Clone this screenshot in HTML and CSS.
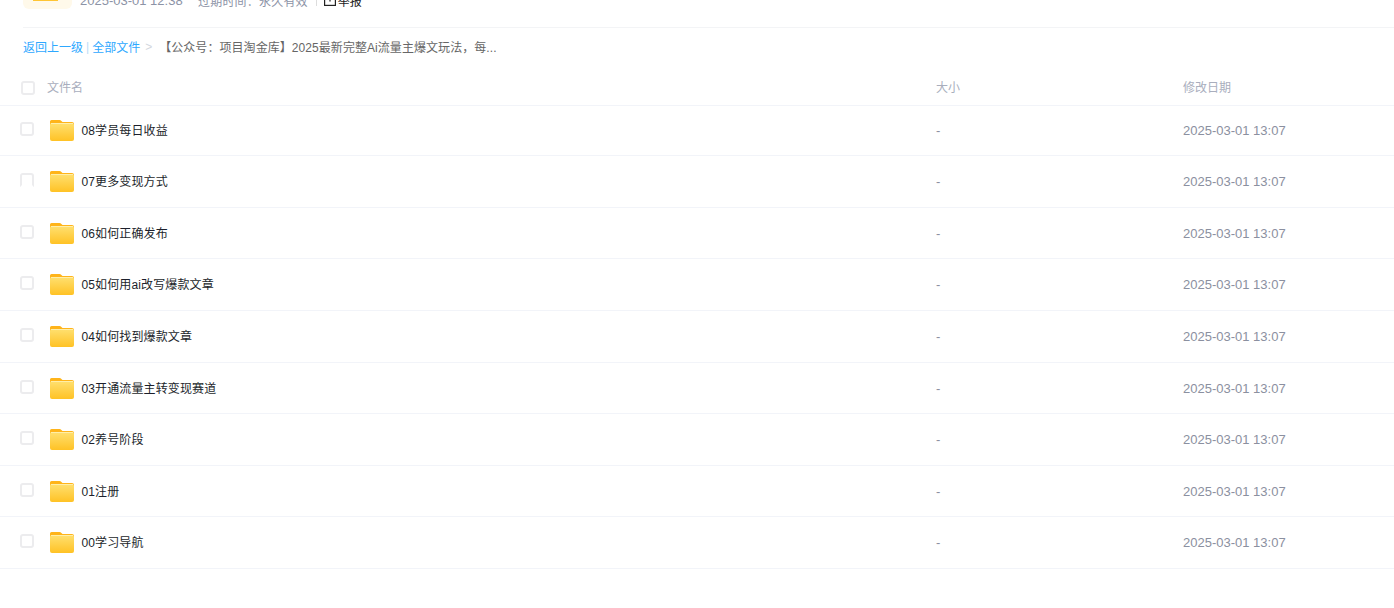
FILE: index.html
```html
<!DOCTYPE html>
<html lang="zh-CN">
<head>
    <meta charset="UTF-8">
    <title>文件列表</title>
    <link rel="stylesheet" href="styles.css">
</head>
<body>
<svg class="sprite" width="0" height="0">
    <defs>
        <linearGradient id="folder_front" x1="0" y1="0" x2="0" y2="1">
            <stop offset="0" stop-color="#ffe070"/>
            <stop offset="1" stop-color="#ffc225"/>
        </linearGradient>
        <symbol id="folder" viewBox="0 0 24 21">
            <path d="M1.500 0h8c.8 0 1.300.3 1.900.9L12.500 2H22a2 2 0 0 1 2 2v3H0V1.500A1.500 1.500 0 0 1 1.500 0z" fill="#ffb41a"/>
            <rect x="0" y="3" width="24" height="18" rx="2" fill="url(#folder_front)"/>
            <rect x="1" y="3" width="22" height="1" fill="#ffeea8"/>
        </symbol>
    </defs>
</svg>
<div class="page">
    <div class="share_head">
        <div class="share_icon"><span class="share_icon_inner"></span></div>
        <div class="share_meta">
            <span class="share_date">2025-03-01 12:38</span>
            <span class="share_expire">过期时间：永久有效</span>
            <span class="share_sep"></span>
            <span class="share_report">
                <svg width="12" height="12" viewBox="0 0 12 12"><rect x=".6" y=".6" width="10.800" height="10.800" fill="none" stroke="#222" stroke-width="1.200"/><path d="M6 2.500v5" stroke="#222" stroke-width="1.200"/></svg>举报
            </span>
        </div>
    </div>
    <div class="crumbs">
        <a class="crumb_link">返回上一级</a>
        <span class="crumb_bar">|</span>
        <a class="crumb_link">全部文件</a>
        <span class="crumb_arrow">&gt;</span>
        <span class="crumb_current">【公众号：项目淘金库】2025最新完整Ai流量主爆文玩法，每...</span>
    </div>
    <div class="list_head">
        <div class="col_name"><span class="check check_head"></span><span>文件名</span></div>
        <div class="col_size">大小</div>
        <div class="col_date">修改日期</div>
    </div>
    <div class="rows">
        <div class="row">
            <div class="col_name"><span class="check"></span><svg class="folder"><use href="#folder"/></svg><span class="file_name">08学员每日收益</span></div>
            <div class="col_size">-</div>
            <div class="col_date">2025-03-01 13:07</div>
        </div>
        <div class="row">
            <div class="col_name"><span class="check check_cut"></span><svg class="folder"><use href="#folder"/></svg><span class="file_name">07更多变现方式</span></div>
            <div class="col_size">-</div>
            <div class="col_date">2025-03-01 13:07</div>
        </div>
        <div class="row">
            <div class="col_name"><span class="check"></span><svg class="folder"><use href="#folder"/></svg><span class="file_name">06如何正确发布</span></div>
            <div class="col_size">-</div>
            <div class="col_date">2025-03-01 13:07</div>
        </div>
        <div class="row">
            <div class="col_name"><span class="check"></span><svg class="folder"><use href="#folder"/></svg><span class="file_name">05如何用ai改写爆款文章</span></div>
            <div class="col_size">-</div>
            <div class="col_date">2025-03-01 13:07</div>
        </div>
        <div class="row">
            <div class="col_name"><span class="check"></span><svg class="folder"><use href="#folder"/></svg><span class="file_name">04如何找到爆款文章</span></div>
            <div class="col_size">-</div>
            <div class="col_date">2025-03-01 13:07</div>
        </div>
        <div class="row">
            <div class="col_name"><span class="check"></span><svg class="folder"><use href="#folder"/></svg><span class="file_name">03开通流量主转变现赛道</span></div>
            <div class="col_size">-</div>
            <div class="col_date">2025-03-01 13:07</div>
        </div>
        <div class="row">
            <div class="col_name"><span class="check"></span><svg class="folder"><use href="#folder"/></svg><span class="file_name">02养号阶段</span></div>
            <div class="col_size">-</div>
            <div class="col_date">2025-03-01 13:07</div>
        </div>
        <div class="row">
            <div class="col_name"><span class="check"></span><svg class="folder"><use href="#folder"/></svg><span class="file_name">01注册</span></div>
            <div class="col_size">-</div>
            <div class="col_date">2025-03-01 13:07</div>
        </div>
        <div class="row">
            <div class="col_name"><span class="check"></span><svg class="folder"><use href="#folder"/></svg><span class="file_name">00学习导航</span></div>
            <div class="col_size">-</div>
            <div class="col_date">2025-03-01 13:07</div>
        </div>
    </div>
</div>
</body>
</html>
```

FILE: styles.css
```css
html, body{
    height: 100%;
    overflow: hidden;
}
body{
    font-family: "Liberation Sans", "Noto Sans CJK SC", sans-serif;
    font-size: 12px;
    margin: 0;
    background: #fff;
}
.sprite{
    display: block;
    height: 0;
}
/* the page is photographed scrolled down, so the head runs off the top */
.page{
    margin-top: -29px;
}
.share_head{
    display: flex;
    align-items: flex-start;
    margin-left: 23px;
    height: 57px;
    border-bottom: 1px solid #f3f4f6;
    box-sizing: border-box;
}
.share_icon{
    width: 49px;
    height: 38px;
    background: #fff9ea;
    border-radius: 6px;
    padding: 27px 0 0 10px;
    box-sizing: border-box;
}
.share_icon_inner{
    display: block;
    width: 25px;
    height: 3px;
    background: #ffc533;
}
.share_meta{
    display: flex;
    align-items: center;
    height: 20px;
    margin-top: 19px;
    margin-left: 8px;
    color: #8c93a6;
}
.share_date{
    width: 118px;
    font-size: 13px;
}
.share_expire{
    letter-spacing: 0.2px;
}
.share_sep{
    width: 1px;
    height: 12px;
    background: #ddd;
    margin: 0 7px 0 8px;
}
.share_report{
    display: flex;
    align-items: center;
    gap: 2px;
    color: #222;
}
.crumbs{
    display: flex;
    align-items: center;
    height: 38px;
    padding-left: 23px;
    padding-bottom: 1px;
    box-sizing: border-box;
}
.crumb_link{
    color: #2ea8ff;
}
.crumb_bar{
    color: #b9dcf7;
    margin: 0 3px;
}
.crumb_arrow{
    color: #d3d7de;
    margin: 0 7px 0 5px;
}
.crumb_current{
    color: #666;
    letter-spacing: 0.06px;
}
.list_head, .row{
    display: grid;
    grid-template-columns: 936px 247px 1fr;
    align-items: center;
    box-sizing: border-box;
    border-bottom: 1px solid #f2f4f9;
}
.list_head{
    height: 40px;
    padding-top: 2px;
    color: #a9aebd;
}
.rows{
    margin-top: -1.18px;
}
.row{
    height: 51.56px;
    padding-top: 0.5px;
    color: #8b90a0;
    font-size: 13px;
}
.col_name{
    display: flex;
    align-items: center;
}
.check{
    display: block;
    width: 14px;
    height: 14px;
    margin-left: 20px;
    margin-top: -3px;
    border: 2px solid #ececee;
    border-radius: 3px;
    box-sizing: border-box;
}
.check_head{
    margin-left: 21px;
    margin-right: 12px;
    margin-top: 2px;
}
.check_cut{
    border-bottom-color: transparent;
    border-radius: 3px 3px 0 0;
}
.folder{
    display: block;
    width: 24px;
    height: 21px;
    margin-left: 16px;
    margin-right: 7.5px;
}
.file_name{
    color: #1c1f2b;
    font-size: 12px;
    letter-spacing: 0.12px;
    padding-bottom: 2px;
}
```
